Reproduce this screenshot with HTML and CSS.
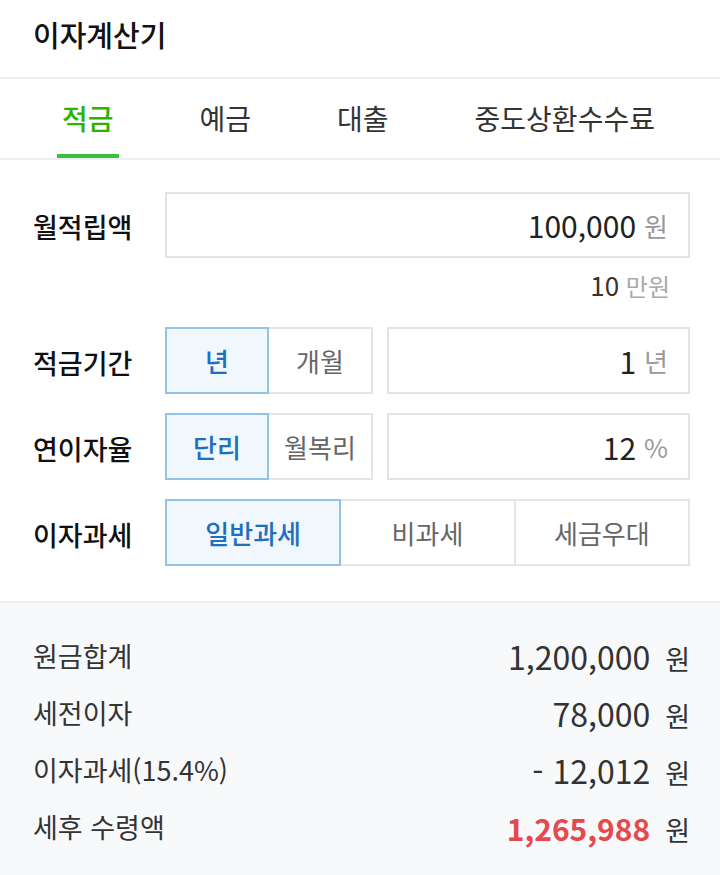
FILE: index.html
```html
<!DOCTYPE html>
<html lang="ko">
<head>
    <meta charset="utf-8">
    <title>이자계산기</title>
    <link rel="stylesheet" href="styles.css">
</head>
<body>
    <header class="title">이자계산기</header>

    <nav class="tabs">
        <a class="tab active">적금</a>
        <a class="tab">예금</a>
        <a class="tab">대출</a>
        <a class="tab">중도상환수수료</a>
    </nav>

    <section class="form">
        <div class="row first">
            <label class="label">월적립액</label>
            <div class="field">
                <span class="value">100,000</span>
                <span class="unit">원</span>
            </div>
        </div>
        <div class="hint"><span class="num">10</span> 만원</div>

        <div class="row">
            <label class="label">적금기간</label>
            <div class="toggle">
                <button class="opt on">년</button>
                <button class="opt">개월</button>
            </div>
            <div class="field">
                <span class="value">1</span>
                <span class="unit">년</span>
            </div>
        </div>

        <div class="row">
            <label class="label">연이자율</label>
            <div class="toggle">
                <button class="opt on">단리</button>
                <button class="opt">월복리</button>
            </div>
            <div class="field">
                <span class="value">12</span>
                <span class="unit">%</span>
            </div>
        </div>

        <div class="row">
            <label class="label">이자과세</label>
            <div class="segments">
                <button class="opt on">일반과세</button>
                <button class="opt">비과세</button>
                <button class="opt">세금우대</button>
            </div>
        </div>
    </section>

    <section class="result">
        <div class="line">
            <span>원금합계</span>
            <span class="amount">1,200,000 <em>원</em></span>
        </div>
        <div class="line">
            <span>세전이자</span>
            <span class="amount">78,000 <em>원</em></span>
        </div>
        <div class="line">
            <span>이자과세(15.4%)</span>
            <span class="amount">- 12,012 <em>원</em></span>
        </div>
        <div class="line">
            <span>세후 수령액</span>
            <span class="amount"><strong>1,265,988</strong> <em>원</em></span>
        </div>
    </section>
</body>
</html>
```

FILE: styles.css
```css
body {
    margin: 0;
    font-family: "Noto Sans CJK KR", "Noto Sans", sans-serif;
    color: #222;
    background: #fff;
}
.title {
    height: 68px;
    padding: 0 0 9px 33px;
    display: flex;
    align-items: center;
    font-size: 29px;
    font-weight: 500;
    color: #111;
    border-bottom: 2px solid #eee;
}
.tabs {
    height: 79px;
    padding-left: 57px;
    display: flex;
    gap: 76px;
    border-bottom: 2px solid #eee;
}
.tab {
    display: flex;
    align-items: center;
    padding: 0 5px;
    font-size: 28px;
    color: #333;
    border-bottom: 4px solid transparent;
    padding-top: 2px;
}
.tab.active {
    color: #2db400;
    font-weight: 500;
    border-bottom-color: #3cbf3c;
}
.form {
    padding: 32px 30px 35px 33px;
}
.row {
    display: flex;
    align-items: center;
    height: 67px;
    margin-bottom: 19px;
}
.row.first {
    height: 66px;
    margin-bottom: 0;
}
.row:last-child {
    margin-bottom: 0;
}
.label {
    width: 132px;
    flex: none;
    font-size: 27px;
    font-weight: 500;
    color: #111;
    padding-top: 3px;
}
.field {
    flex: 1;
    height: 100%;
    box-sizing: border-box;
    border: 2px solid #e3e3e3;
    display: flex;
    align-items: center;
    justify-content: flex-end;
    gap: 8px;
    padding-right: 20px;
    font-size: 30px;
}
.value {
    color: #222;
}
.unit {
    color: #999;
    font-size: 26px;
}
.hint {
    margin: 10px 0 24px;
    line-height: 34px;
    text-align: right;
    padding-right: 20px;
    font-size: 24px;
    color: #aaa;
}
.hint .num {
    color: #333;
    font-size: 26px;
}
.toggle {
    display: flex;
    height: 100%;
    margin-right: 14px;
}
.opt {
    font-family: inherit;
    font-size: 26px;
    color: #666;
    background: #fff;
    border: 2px solid #e5e5e5;
    margin: 0;
    padding: 0;
    height: 100%;
}
.toggle .opt {
    width: 104px;
}
.toggle .opt + .opt {
    border-left: none;
}
.opt.on {
    background: #f0f7fd;
    border-color: #93c4e8;
    color: #1f6fc0;
    font-weight: 500;
}
.segments {
    flex: 1;
    display: flex;
    height: 100%;
}
.segments .opt {
    flex: 1;
}
.segments .opt + .opt {
    border-left: none;
}
.result {
    background: #f8f9fb;
    border-top: 2px solid #eceef0;
    padding: 24px 30px 20px 33px;
}
.line {
    height: 57px;
    display: flex;
    align-items: center;
    justify-content: space-between;
    font-size: 27px;
    color: #333;
}
.amount {
    font-size: 32px;
    color: #333;
}
.amount em {
    font-style: normal;
    font-size: 27px;
    margin-left: 6px;
}
.amount strong {
    color: #e5484d;
    font-weight: 700;
    font-size: 30px;
}
```
